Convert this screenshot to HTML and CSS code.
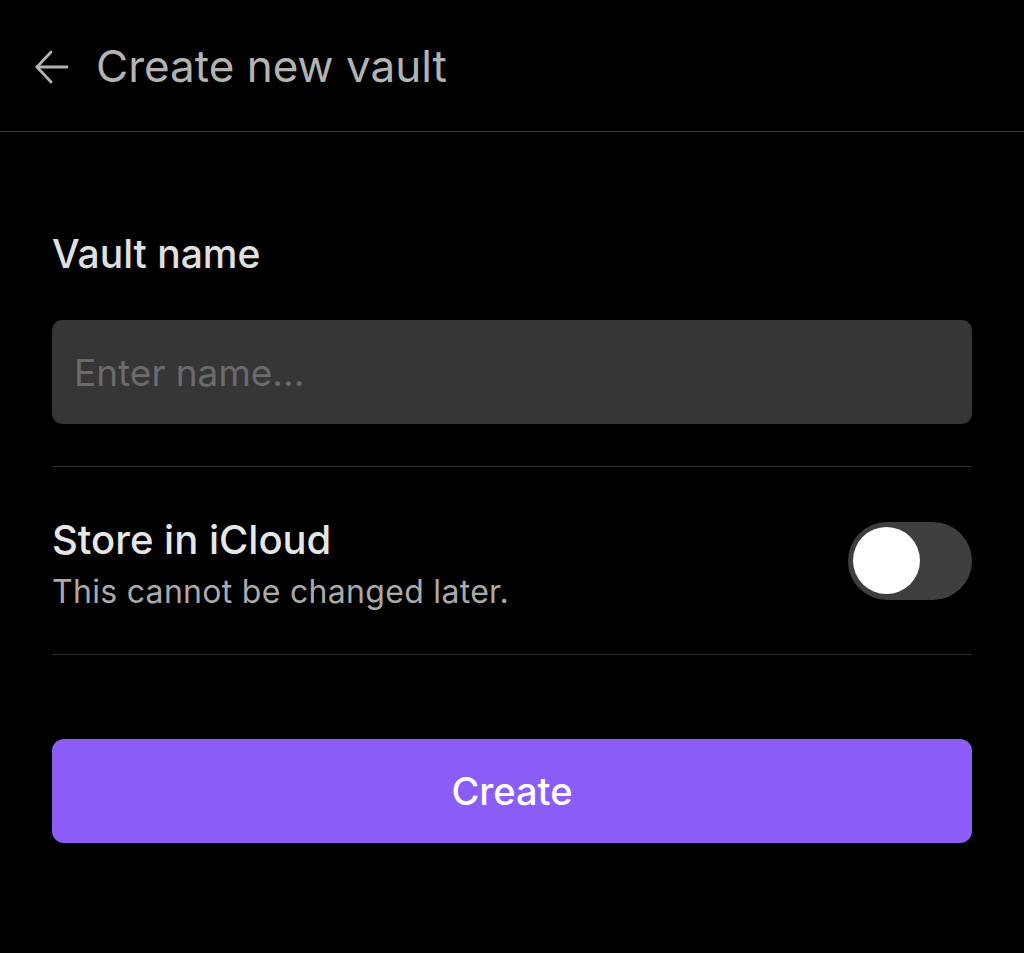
FILE: index.html
```html
<!DOCTYPE html>
<html lang="en">
<head>
    <meta charset="UTF-8">
    <meta name="viewport" content="width=device-width, initial-scale=1.0">
    <title>Create new vault</title>
    <link rel="stylesheet" href="styles.css">
</head>
<body>
    <div class="header">
        <svg class="back" width="36" height="36" viewBox="0 0 36 36" fill="none" stroke="#b3b3b3" stroke-width="2.8" stroke-linecap="round" stroke-linejoin="round">
            <path d="M33 18H3"/>
            <path d="M17 3L3 18l14 15"/>
        </svg>
        <h1>Create new vault</h1>
    </div>
    <div class="content">
        <label class="field-label" for="vault-name">Vault name</label>
        <input class="name-input" id="vault-name" type="text" placeholder="Enter name...">
        <div class="setting">
            <div class="setting-info">
                <div class="setting-name">Store in iCloud</div>
                <div class="setting-desc">This cannot be changed later.</div>
            </div>
            <div class="toggle"><div class="knob"></div></div>
        </div>
        <button class="create-btn">Create</button>
    </div>
</body>
</html>
```

FILE: styles.css
```css
body {
    margin: 0;
    background-color: #000;
    font-family: Inter, "Noto Sans", sans-serif;
    color: #dedede;
}
.header {
    display: flex;
    align-items: center;
    height: 132px;
    padding-left: 34px;
    border-bottom: 1px solid #333;
    box-sizing: border-box;
}
.back {
    margin-right: 26px;
    margin-top: 2px;
}
h1 {
    margin: 0;
    font-size: 44px;
    font-weight: 400;
    color: #b3b3b3;
}
.content {
    padding: 0 52px;
}
.field-label {
    display: block;
    margin-top: 98px;
    font-size: 39px;
    font-weight: 500;
    color: #e0e0e0;
}
.name-input {
    display: block;
    width: 100%;
    height: 104px;
    margin-top: 43px;
    padding: 0 22px;
    box-sizing: border-box;
    border: none;
    border-radius: 10px;
    background-color: #363636;
    font-family: inherit;
    font-size: 37px;
    color: #ddd;
    outline: none;
}
.name-input::placeholder {
    color: #6b6b6b;
}
.setting {
    display: flex;
    align-items: center;
    justify-content: space-between;
    margin-top: 42px;
    height: 189px;
    border-top: 1px solid #2e2e2e;
    border-bottom: 1px solid #2e2e2e;
    box-sizing: border-box;
}
.setting-info {
    padding-top: 4px;
}
.setting-name {
    font-size: 40px;
    font-weight: 500;
    color: #e6e6e6;
}
.setting-desc {
    margin-top: 8px;
    font-size: 32px;
    letter-spacing: 0.3px;
    color: #aaa;
}
.toggle {
    width: 124px;
    height: 78px;
    border-radius: 39px;
    background-color: #3e3e3e;
    display: flex;
    align-items: center;
    padding: 0 5px;
    box-sizing: border-box;
}
.knob {
    width: 67px;
    height: 67px;
    border-radius: 50%;
    background-color: #fff;
}
.create-btn {
    display: block;
    width: 100%;
    height: 104px;
    margin-top: 84px;
    border: none;
    border-radius: 12px;
    background-color: #8b5cf6;
    font-family: inherit;
    font-size: 38px;
    font-weight: 500;
    color: #fff;
    cursor: pointer;
}
```
